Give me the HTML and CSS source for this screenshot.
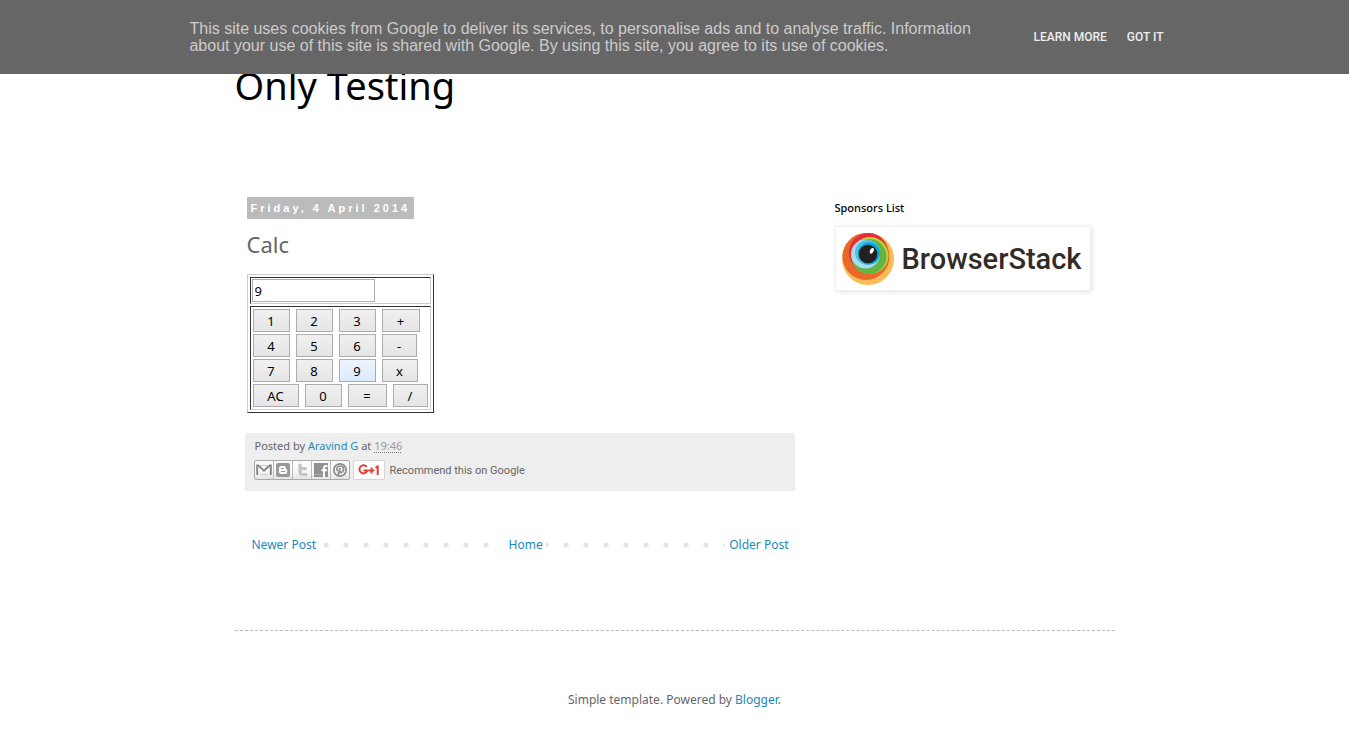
FILE: index.html
```html
<!DOCTYPE html>
<html lang="en">
<head>
<meta charset="utf-8">
<title>Only Testing: Calc</title>
<link rel="stylesheet" href="styles.css">
</head>
<body>
<div class="cookie-bar">
  <p class="cookie-text">This site uses cookies from Google to deliver its services, to personalise ads and to analyse traffic. Information about your use of this site is shared with Google. By using this site, you agree to its use of cookies.</p>
  <div class="cookie-actions">
    <a href="#">LEARN MORE</a>
    <a href="#">GOT IT</a>
  </div>
</div>

<div class="page">
  <header class="site-header"><h1>Only Testing</h1></header>

  <div class="columns">
    <main class="main">
      <article class="post">
        <h2 class="date"><span>Friday, 4 April 2014</span></h2>
        <h3 class="post-title">Calc</h3>
        <form class="calc">
          <div class="calc-display"><input type="text" aria-label="Result" value="9"></div>
          <div class="calc-keys">
            <div class="key-row"><button type="button">1</button><button type="button">2</button><button type="button">3</button><button type="button" class="plus">+</button></div>
            <div class="key-row"><button type="button">4</button><button type="button">5</button><button type="button">6</button><button type="button" class="slim">-</button></div>
            <div class="key-row"><button type="button">7</button><button type="button">8</button><button type="button" class="active">9</button><button type="button" class="times">x</button></div>
            <div class="key-row"><button type="button" class="clear">AC</button><button type="button">0</button><button type="button" class="equals">=</button><button type="button" class="slim">/</button></div>
          </div>
        </form>
        <footer class="post-footer">
          <p>Posted by <a href="#">Aravind G</a> at <a href="#" class="time">19:46</a></p>
          <div class="share">
            <div class="share-group">
              <a href="#" aria-label="Email this"><svg viewBox="0 0 18 18"><path d="M2.200 14V4.500h1.200L9 9.700l5.600-5.200h1.200V14" fill="none" stroke="#888" stroke-width="2"/><path d="M4 4.500h10M5 13.500h8" stroke="#c8c8c8"/></svg></a>
              <a href="#" aria-label="BlogThis!"><svg viewBox="0 0 18 18"><rect x="2" y="2" width="14" height="14" rx="2" fill="#999"/><path d="M7.500 5h2.200a2.300 2.300 0 0 1 2.300 2.300c0 1 .3 1.200 1.300 1.400v1.800a2.500 2.500 0 0 1-2.500 2.500H7.500A2.500 2.500 0 0 1 5 10.500v-3A2.500 2.500 0 0 1 7.500 5z" fill="#fff"/><path d="M7.300 7.500h2M7.300 10.500h3.500" stroke="#999" stroke-width="1.200" stroke-linecap="round"/></svg></a>
              <a href="#" aria-label="Share to Twitter"><svg viewBox="0 0 18 18"><path d="M7 4v7q0 2.500 2.500 2.500H13M7 7.500h5.500" fill="none" stroke="#c4c4c4" stroke-width="3.200" stroke-linecap="round"/></svg></a>
              <a href="#" aria-label="Share to Facebook"><svg viewBox="0 0 18 18"><path d="M2 2h14v14H2z" fill="#909090"/><path d="M15.500 5H14q-2 0-2 2v9M9.500 9.300H15" fill="none" stroke="#fff" stroke-width="2"/><path d="M2 13.500h8" stroke="#aaa"/></svg></a>
              <a href="#" aria-label="Share to Pinterest"><svg viewBox="0 0 18 18"><circle cx="9" cy="9" r="6.200" fill="#eee" stroke="#8e8e8e" stroke-width="1.700"/><path d="M7 15l2-8M6.500 10C4.500 7 6.700 5 9.200 5c3.300 0 4 2.500 3 4.700-.8 2-3 2.200-3.700.8" fill="none" stroke="#8e8e8e" stroke-width="1.700"/></svg></a>
            </div>
            <button type="button" class="plus-one" aria-label="Recommend on Google"><svg viewBox="0 0 22 12"><path d="M8.700 3A4 4 0 1 0 9.300 6.500H5.500M10.500 6.500h6M13.500 3.500v6M17.500 3.500l2.200-1V11" fill="none" stroke="#db4437" stroke-width="2"/></svg></button>
            <span class="recommend">Recommend this on Google</span>
          </div>
        </footer>
      </article>
      <nav class="pager">
        <a href="#">Newer Post</a>
        <a href="#">Home</a>
        <a href="#">Older Post</a>
      </nav>
    </main>

    <aside class="sidebar">
      <h2>Sponsors List</h2>
      <a href="#" class="sponsor">
        <svg viewBox="0 0 54 54"><circle cx="27" cy="27" r="26" fill="#f8bd59"/><circle cx="25" cy="24.500" r="23.500" fill="#e9692b"/><circle cx="27.500" cy="20.500" r="19.500" fill="#e62e36"/><circle cx="29" cy="23.500" r="18.500" fill="#bdd532"/><circle cx="28" cy="24.500" r="17.500" fill="#62b445"/><circle cx="24.500" cy="22" r="14.500" fill="#a9dcec"/><circle cx="26.500" cy="20.500" r="12.500" fill="#54bfe4"/><circle cx="28" cy="21.500" r="11" fill="#05a9d7"/><circle cx="27" cy="22" r="9.300" fill="#231f20"/><ellipse cx="30.800" cy="18.800" rx="1.800" ry="3" transform="rotate(25 30.800 18.800)" fill="#fff"/></svg>
        <span>BrowserStack</span>
      </a>
    </aside>
  </div>

  <footer class="site-footer">Simple template. Powered by <a href="#">Blogger</a>.</footer>
</div>
</body>
</html>
```
FILE: styles.css
```css
* { box-sizing: border-box; }

body {
  margin: 0;
  background: #fff;
  color: #666;
  font: 12px/16px "Noto Sans", "Open Sans", sans-serif;
}

h1, h2, h3, p { margin: 0; font-weight: normal; }
a { color: #2288bb; text-decoration: none; }

.cookie-bar {
  position: fixed;
  top: 0;
  left: 0;
  right: 0;
  z-index: 10;
  display: flex;
  justify-content: center;
  align-items: center;
  gap: 40px;
  padding: 20px 8px 20px 12px;
  background: #666;
  font-family: "Liberation Sans", Arial, sans-serif;
}
.cookie-text { max-width: 800px; color: #ccc; font-size: 16px; line-height: 17px; }
.cookie-actions { display: flex; gap: 20px; padding-left: 4px; white-space: nowrap; }
.cookie-actions a { color: #eee; font: 500 12px/16px Roboto, sans-serif; }

.page { max-width: 880px; margin: 0 auto; }

.site-header { padding: 58px 0 84px; }
.site-header h1 { color: #000; font-size: 38px; line-height: 55px; }

.columns {
  display: grid;
  grid-template-columns: minmax(0, 1fr) 260px;
  gap: 40px;
  padding: 0 20px 72px 10px;
  border-bottom: 1px dashed #bbb;
}

.date { padding-left: 2px; }
.date span {
  display: inline-block;
  padding: 3px 4px;
  background: #bbb;
  color: #fff;
  font: bold 11px/16px "Liberation Sans", Arial, sans-serif;
  letter-spacing: 3px;
}
.post-title { padding: 10px 0 15px 2px; font-size: 22px; line-height: 30px; }

.calc {
  display: grid;
  gap: 2px;
  width: 187px;
  margin: 0 0 20px 2px;
  padding: 2px;
  border: 1px solid;
  border-color: #ccc #333 #333 #ccc;
}
.calc-display, .calc-keys {
  border: 1px solid;
  border-color: #333 #ccc #ccc #333;
}
.calc-display { display: flex; padding: 1px; }
.calc-display input {
  width: 123px;
  height: 23px;
  padding: 1px 2px;
  border: 1px solid #abadb3;
  color: #000;
  font: 13px "Noto Sans", sans-serif;
}
.calc-keys { display: grid; gap: 2px; padding: 2px; }
.key-row { display: flex; gap: 6px; }
.key-row button {
  width: 37px;
  height: 23px;
  padding: 0;
  border: 1px solid #acacac;
  background: linear-gradient(#f0f0f0, #e5e5e5);
  color: #000;
  font: 13px/20px "Noto Sans", sans-serif;
}
.key-row .plus { width: 38px; }
.key-row .slim { width: 35px; }
.key-row .times { width: 36px; }
.key-row .clear { width: 46px; }
.key-row .equals { width: 39px; }
.key-row .active { border-color: #7eb4ea; background: linear-gradient(#ecf4fc, #dcecfc); }

.post-footer { padding: 5px 9px 11px; background: #eee; font-size: 11px; }
.post-footer p { padding-left: 1px; }
.time { color: #999; text-decoration: underline dotted #777; text-underline-offset: 2px; }
.share { display: flex; align-items: center; margin-top: 6px; }
.share-group {
  display: flex;
  border: 1px solid #aaa;
  border-radius: 2px;
  background: linear-gradient(#fafafa 50%, #e5e5e5);
}
.share-group a { display: flex; width: 19px; height: 18px; border-right: 1px solid #bbb; }
.share-group a:last-child { width: 18px; border-right: 0; }
.share-group svg { width: 18px; height: 18px; }
.plus-one {
  display: flex;
  align-items: center;
  justify-content: center;
  width: 32px;
  height: 20px;
  margin: 0 5px 0 3px;
  padding: 0;
  border: 1px solid #d5d5d5;
  border-radius: 2px;
  background: #fff;
}
.plus-one svg { width: 22px; height: 12px; }
.recommend { font-family: Roboto, sans-serif; line-height: 18px; padding-top: 2px; }

.pager {
  display: flex;
  justify-content: space-between;
  margin-top: 41px;
  background: radial-gradient(circle at 10px 10px, #e2e2e2 2px, transparent 3px) -9px 3px / 20px 20px repeat-x;
}
.pager a { padding: 5px 6px 5px 7px; background: #fff; }
.pager a:nth-child(2) { padding-right: 3px; }
.pager a:last-child { padding-left: 4px; }

.sidebar h2 { padding-top: 3px; color: #000; font-size: 11px; font-weight: 500; }
.sponsor {
  display: flex;
  align-items: center;
  gap: 7px;
  width: 256px;
  height: 65px;
  margin-top: 10px;
  padding: 5px;
  border: 1px solid #eee;
  box-shadow: 1px 1px 5px rgba(0, 0, 0, .1);
  color: #332b27;
  font: 500 29px/36px Roboto, sans-serif;
}
.sponsor svg { flex: none; width: 54px; height: 54px; }

.site-footer { padding: 61px 0 40px; text-align: center; }
```
